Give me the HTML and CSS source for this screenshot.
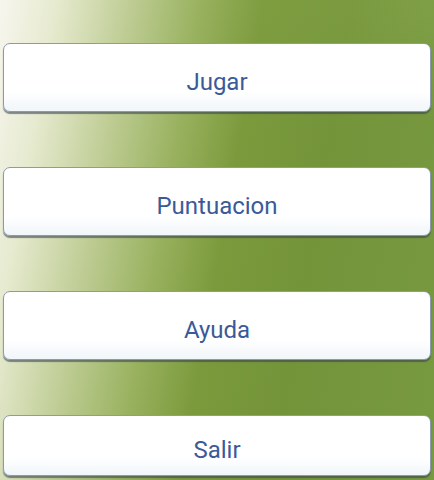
FILE: index.html
```html
<!DOCTYPE html>
<html>
<head>
<meta charset="utf-8">
<link rel="stylesheet" href="styles.css">
</head>
<body>
<div class="screen">
  <div class="menu">
    <button class="btn">Jugar</button>
    <button class="btn">Puntuacion</button>
    <button class="btn">Ayuda</button>
    <button class="btn btn-last">Salir</button>
  </div>
</div>
</body>
</html>
```
FILE: styles.css
```css
html, body {
  margin: 0;
  padding: 0;
}
body {
  width: 434px;
  height: 480px;
  overflow: hidden;
}
.screen {
  width: 434px;
  height: 480px;
  background:
    radial-gradient(ellipse 260px 120px at 100% 0%, rgba(150, 180, 90, 0.3), rgba(150, 180, 90, 0) 100%),
    linear-gradient(100deg, #f7f6ee 0%, #e6eacf 11%, #bfcd95 25%, #98b15e 39%, #7b9a3c 51%, #74943a 68%, #779940 100%);
}
.menu {
  display: flex;
  flex-direction: column;
  gap: 55px;
  padding: 43px 3px 0 3px;
}
.btn {
  height: 69px;
  width: 100%;
  border: 1px solid #8d9aae;
  border-radius: 7px;
  background: linear-gradient(180deg, #ffffff 0%, #ffffff 70%, #f1f6fa 100%);
  box-shadow: 0 2px 1px rgba(55, 65, 80, 0.6);
  font-family: Roboto, "Noto Sans", sans-serif;
  font-size: 24px;
  color: #3a5a98;
  text-align: center;
  padding: 9px 0 0 0;
  margin: 0;
}
.btn-last {
  height: 61px;
  padding-top: 8px;
}
```
